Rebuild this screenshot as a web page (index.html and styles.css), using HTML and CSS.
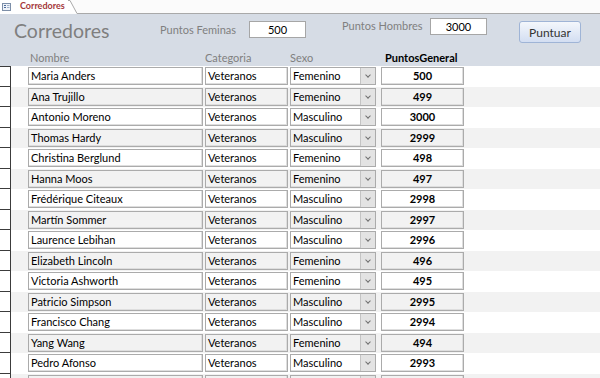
FILE: index.html
```html
<!DOCTYPE html>
<html lang="es">
<head>
    <meta charset="UTF-8">
    <title>Corredores</title>
    <link rel="stylesheet" href="styles.css">
</head>
<body>
    <div class="tabbar">
        <div class="tab">
            <svg class="tab-icon" width="9" height="8" viewBox="0 0 9 8">
                <rect x="0.5" y="0.5" width="8" height="7" fill="#eef2f8" stroke="#7d8fa8"/>
                <line x1="2" y1="2.5" x2="4" y2="2.5" stroke="#4a6a9a"/>
                <line x1="5" y1="2.5" x2="7.5" y2="2.5" stroke="#9fb0c8"/>
                <line x1="2" y1="4.5" x2="4" y2="4.5" stroke="#4a6a9a"/>
                <line x1="5" y1="4.5" x2="7.5" y2="4.5" stroke="#9fb0c8"/>
            </svg>
            <span class="tab-title">Corredores</span>
        </div>
        <svg class="tab-edge" width="10" height="14" viewBox="0 0 10 14">
            <polygon points="0,0 2,0 9,13.5 0,13.5" fill="#fff"/>
            <polyline points="0,0.5 2,0.5 9,13.5 10,13.5" fill="none" stroke="#a9a9a9"/>
        </svg>
        <div class="tab-rest"></div>
    </div>

    <div class="form-header">
        <div class="header-top">
            <h1>Corredores</h1>
            <div class="param param-fem">
                <span class="param-label">Puntos Feminas</span>
                <div class="param-box">500</div>
            </div>
            <div class="param param-hom">
                <span class="param-label">Puntos Hombres</span>
                <div class="param-box">3000</div>
            </div>
            <button class="btn">Puntuar</button>
        </div>
        <div class="col-heads">
            <span class="col col-nombre">Nombre</span>
            <span class="col col-cat">Categoria</span>
            <span class="col col-sexo">Sexo</span>
            <span class="col col-pts">PuntosGeneral</span>
        </div>
    </div>

    <div class="rows">
        <div class="row"><span class="sel"></span><span class="f f-nombre">Maria Anders</span><span class="f f-cat">Veteranos</span><span class="f f-sexo">Femenino<i class="drop"></i></span><span class="f f-pts">500</span></div>
        <div class="row"><span class="sel"></span><span class="f f-nombre">Ana Trujillo</span><span class="f f-cat">Veteranos</span><span class="f f-sexo">Femenino<i class="drop"></i></span><span class="f f-pts">499</span></div>
        <div class="row"><span class="sel"></span><span class="f f-nombre">Antonio Moreno</span><span class="f f-cat">Veteranos</span><span class="f f-sexo">Masculino<i class="drop"></i></span><span class="f f-pts">3000</span></div>
        <div class="row"><span class="sel"></span><span class="f f-nombre">Thomas Hardy</span><span class="f f-cat">Veteranos</span><span class="f f-sexo">Masculino<i class="drop"></i></span><span class="f f-pts">2999</span></div>
        <div class="row"><span class="sel"></span><span class="f f-nombre">Christina Berglund</span><span class="f f-cat">Veteranos</span><span class="f f-sexo">Femenino<i class="drop"></i></span><span class="f f-pts">498</span></div>
        <div class="row"><span class="sel"></span><span class="f f-nombre">Hanna Moos</span><span class="f f-cat">Veteranos</span><span class="f f-sexo">Femenino<i class="drop"></i></span><span class="f f-pts">497</span></div>
        <div class="row"><span class="sel"></span><span class="f f-nombre">Frédérique Citeaux</span><span class="f f-cat">Veteranos</span><span class="f f-sexo">Masculino<i class="drop"></i></span><span class="f f-pts">2998</span></div>
        <div class="row"><span class="sel"></span><span class="f f-nombre">Martín Sommer</span><span class="f f-cat">Veteranos</span><span class="f f-sexo">Masculino<i class="drop"></i></span><span class="f f-pts">2997</span></div>
        <div class="row"><span class="sel"></span><span class="f f-nombre">Laurence Lebihan</span><span class="f f-cat">Veteranos</span><span class="f f-sexo">Masculino<i class="drop"></i></span><span class="f f-pts">2996</span></div>
        <div class="row"><span class="sel"></span><span class="f f-nombre">Elizabeth Lincoln</span><span class="f f-cat">Veteranos</span><span class="f f-sexo">Femenino<i class="drop"></i></span><span class="f f-pts">496</span></div>
        <div class="row"><span class="sel"></span><span class="f f-nombre">Victoria Ashworth</span><span class="f f-cat">Veteranos</span><span class="f f-sexo">Femenino<i class="drop"></i></span><span class="f f-pts">495</span></div>
        <div class="row"><span class="sel"></span><span class="f f-nombre">Patricio Simpson</span><span class="f f-cat">Veteranos</span><span class="f f-sexo">Masculino<i class="drop"></i></span><span class="f f-pts">2995</span></div>
        <div class="row"><span class="sel"></span><span class="f f-nombre">Francisco Chang</span><span class="f f-cat">Veteranos</span><span class="f f-sexo">Masculino<i class="drop"></i></span><span class="f f-pts">2994</span></div>
        <div class="row"><span class="sel"></span><span class="f f-nombre">Yang Wang</span><span class="f f-cat">Veteranos</span><span class="f f-sexo">Femenino<i class="drop"></i></span><span class="f f-pts">494</span></div>
        <div class="row"><span class="sel"></span><span class="f f-nombre">Pedro Afonso</span><span class="f f-cat">Veteranos</span><span class="f f-sexo">Masculino<i class="drop"></i></span><span class="f f-pts">2993</span></div>
        <div class="row"><span class="sel"></span><span class="f f-nombre"></span><span class="f f-cat"></span><span class="f f-sexo"><i class="drop"></i></span><span class="f f-pts"></span></div>
    </div>
</body>
</html>
```

FILE: styles.css
```css
body {
    margin: 0;
    width: 600px;
    height: 378px;
    overflow: hidden;
    background: #fff;
    font-family: Lato, 'Liberation Sans', sans-serif;
    font-size: 11px;
    color: #000;
}
/* Pestaña del formulario */
.tabbar {
    display: flex;
    height: 14px;
    background: #fbfbfb;
}
.tab {
    display: flex;
    align-items: center;
    gap: 9px;
    width: 66px;
    padding-left: 2px;
    height: 14px;
    background: #fff;
}
.tab-icon {
    display: block;
}
.tab-title {
    color: #a4373a;
    font-weight: bold;
    font-size: 9px;
    margin-top: -3px;
}
.tab-edge {
    display: block;
}
.tab-rest {
    flex: 1;
    border-bottom: 1px solid #a9a9a9;
    height: 13px;
}
/* Encabezado */
.form-header {
    background: #d6dce5;
    height: 52px;
}
.header-top {
    display: flex;
    align-items: flex-start;
    height: 34px;
    padding-left: 14px;
}
h1 {
    margin: 5px 0 0 0;
    width: 146px;
    font-size: 19.5px;
    font-weight: normal;
    line-height: 24px;
    color: #7f7f7f;
}
.param {
    display: flex;
    align-items: center;
}
.param-fem {
    margin-top: 7px;
}
.param-hom {
    margin-top: 4px;
    margin-left: 36px;
}
.param-label {
    color: #808080;
    font-size: 11px;
}
.param-fem .param-label {
    width: 89px;
}
.param-hom .param-label {
    width: 88px;
    margin-top: -2px;
}
.param-box {
    width: 57px;
    height: 17px;
    box-sizing: border-box;
    background: #fff;
    border: 1px solid #a6a6a6;
    text-align: center;
    line-height: 15px;
    font-size: 11px;
}
.btn {
    margin: 7px 0 0 32px;
    width: 62px;
    height: 22px;
    border: 1px solid #9fb4d6;
    border-radius: 3px;
    background: linear-gradient(#f4f7fc, #d3def2);
    color: #333;
    font-family: Lato, 'Liberation Sans', sans-serif;
    font-size: 12px;
    padding: 0;
}
.col-heads {
    display: flex;
    height: 18px;
    align-items: center;
}
.col {
    color: #808080;
    font-size: 11px;
}
.col-nombre {
    margin-left: 30px;
    width: 175px;
}
.col-cat {
    width: 85px;
}
.col-sexo {
    width: 95px;
}
.col-pts {
    color: #000;
    font-weight: bold;
}
/* Filas */
.row {
    display: flex;
    align-items: center;
    height: 20.5px;
}
.row:nth-child(even) {
    background: #f2f2f2;
}
.sel {
    align-self: stretch;
    width: 11px;
    box-sizing: border-box;
    background: #fff;
    border-right: 1px solid #3c3c3c;
    border-bottom: 1px solid #3c3c3c;
    margin-right: 17px;
}
.row:first-child .sel {
    border-top: 1px solid #3c3c3c;
}
.f {
    position: relative;
    height: 18px;
    box-sizing: border-box;
    border: 1px solid #ababab;
    box-shadow: inset -1px -1px 0 #dedede;
    padding-left: 2px;
    line-height: 16px;
    white-space: nowrap;
    overflow: hidden;
}
.f-nombre {
    width: 175px;
    margin-right: 2px;
}
.f-cat {
    width: 83px;
    margin-right: 2px;
}
.f-sexo {
    width: 86px;
    margin-right: 5px;
}
.f-pts {
    width: 83px;
    padding-left: 0;
    text-align: center;
    font-weight: bold;
}
.drop {
    position: absolute;
    top: 0;
    right: 0;
    width: 14px;
    height: 16px;
    background: #e3e3e3;
    border-left: 1px solid #c4c4c4;
}
.drop::after {
    content: "";
    position: absolute;
    left: 5px;
    top: 5px;
    width: 3px;
    height: 3px;
    border-right: 1px solid #707070;
    border-bottom: 1px solid #707070;
    transform: rotate(45deg);
}
```
